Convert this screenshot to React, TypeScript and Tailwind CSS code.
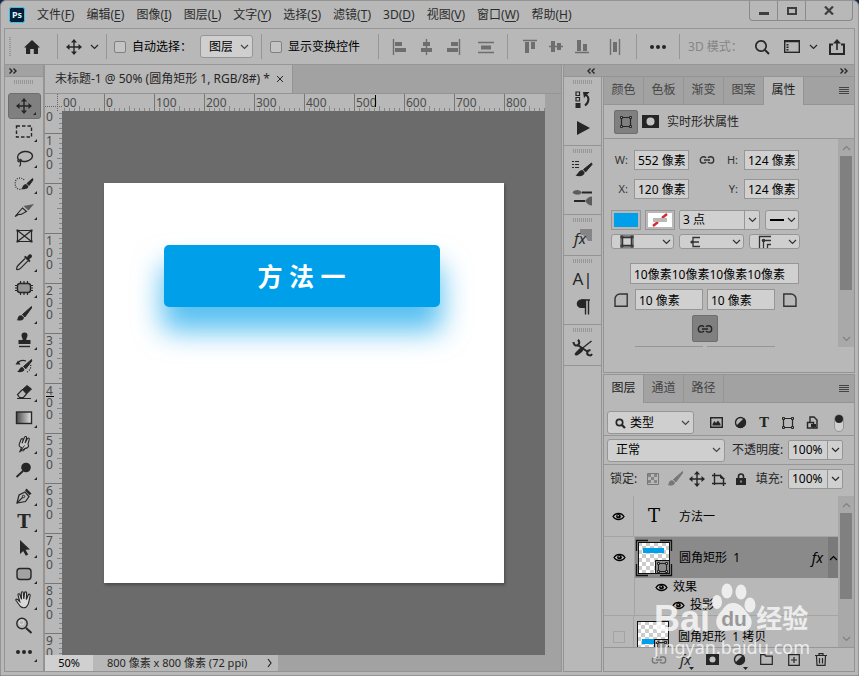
import type { ReactNode } from 'react';

const INK = '#262626';

const menus = [
  ['文件', 'F'], ['编辑', 'E'], ['图像', 'I'], ['图层', 'L'], ['文字', 'Y'], ['选择', 'S'],
  ['滤镜', 'T'], ['3D', 'D'], ['视图', 'V'], ['窗口', 'W'], ['帮助', 'H'],
];

function Svg({ w = 24, h = 24, children }: { w?: number; h?: number; children: ReactNode }) {
  return (
    <svg width={w} height={h} viewBox={`0 0 ${w} ${h}`} fill="none" stroke="currentColor" strokeWidth="1.4" className="shrink-0" aria-hidden="true">
      {children}
    </svg>
  );
}

function Chevron({ up = false }: { up?: boolean }) {
  return (
    <Svg w={9} h={6}>
      <path d={up ? 'M1 5l3.5-3.5L8 5' : 'M1 1l3.5 3.5L8 1'} strokeWidth="1.2" />
    </Svg>
  );
}

const moveIcon = (
  <Svg>
    <path d="M12 6v12M6 12h12" />
    <path d="M12 4l3 3.5H9zM12 20l3-3.5H9zM4 12l3.5-3v6zM20 12l-3.5-3v6z" fill="currentColor" stroke="none" />
  </Svg>
);

const brushIcon = (
  <Svg>
    <path d="M19.500 4.500L10.500 12.500l2.300 2.500L19.500 6z" fill="currentColor" strokeWidth="1" />
    <path d="M9.500 13.200c-2.500-.2-3.500 1.600-3.800 3.300-.2 1-.8 1.500-1.400 1.600 3 1.200 7.500.2 7.700-2.700z" fill="currentColor" stroke="none" />
  </Svg>
);

const shapeBoxIcon = (
  <Svg w={14} h={14}>
    <path d="M2.500 2.500h9v9h-9z" strokeWidth="1.2" />
    <path d="M1.500 1.500h2v2h-2zM10.500 1.500h2v2h-2zM1.500 10.500h2v2h-2zM10.500 10.500h2v2h-2z" fill="#a0a0a0" strokeWidth="1" />
  </Svg>
);

const chainIcon = (
  <Svg w={16} h={10}>
    <path d="M7 2.800C6.300 2 5.500 1.700 4.500 1.700a3.200 3.200 0 000 6.400c1 0 1.800-.3 2.500-1.100M9 2.800c.7-.8 1.500-1.100 2.500-1.100a3.200 3.200 0 010 6.400c-1 0-1.800-.3-2.500-1.100M5 5h6" />
  </Svg>
);

const maskIcon = (
  <Svg w={17} h={13}>
    <rect width="17" height="13" fill="currentColor" stroke="none" />
    <circle cx="8.500" cy="6.500" r="4" fill="#c4c4c4" stroke="none" />
  </Svg>
);

const halfIcon = (
  <Svg w={13} h={13}>
    <circle cx="6.500" cy="6.500" r="5" />
    <path d="M10 3a5 5 0 01-7 7z" fill="currentColor" />
  </Svg>
);

const searchIcon = (
  <Svg w={16} h={16}>
    <circle cx="7" cy="7" r="5.200" strokeWidth="1.700" />
    <path d="M11 11l4 4" strokeWidth="2" />
  </Svg>
);

const eyeIcon = (
  <Svg w={13} h={9}>
    <path d="M1 4.500C3.500.3 9.500.3 12 4.500 9.500 8.700 3.500 8.700 1 4.500z" strokeWidth="1.300" />
    <circle cx="6.500" cy="4.300" r="2.300" fill="currentColor" stroke="none" />
    <circle cx="6.200" cy="3.700" r=".8" fill="#c4c4c4" stroke="none" />
  </Svg>
);

const tools: { name: string; icon: ReactNode; flyout?: boolean }[] = [
  { name: '移动', icon: moveIcon },
  { name: '矩形选框', icon: <Svg><rect x="4.500" y="6" width="15" height="11" strokeDasharray="3.500 2" /></Svg> },
  {
    name: '套索',
    icon: (
      <Svg>
        <ellipse cx="13" cy="10.500" rx="7.500" ry="5" transform="rotate(-8 13 10.500)" />
        <path d="M6.500 13.500c-1.500 1-.5 2.700 1.500 2.200s1.500-2.700-.2-2.500M8 15.500c1 1.500 1 3-.5 5" strokeWidth="1.100" />
      </Svg>
    ),
  },
  {
    name: '快速选择',
    icon: (
      <Svg>
        <path d="M12 8c-1-2-6-3-8 0-1.500 3-1 8 2 9 1.500.7 3 .5 4 0" strokeDasharray="1 1.300" strokeWidth="1.200" />
        <path d="M20.500 6.500l-5.500 5 2 2L21 8z" fill="currentColor" strokeWidth="1" />
        <path d="M14 12c-3 .3-3.200 3-4.500 5 3 .5 7 0 6.800-2.800z" fill="currentColor" stroke="none" />
      </Svg>
    ),
  },
  {
    name: '切片',
    icon: (
      <Svg>
        <path d="M11.500 8l10.500-2-5.500 6.500z" fill="#5c5c5c" stroke="none" />
        <path d="M3 18.500l7.500-8.500 4 3.500-5.500 3-2-.2z" strokeWidth="1.100" />
      </Svg>
    ),
  },
  {
    name: '图框',
    flyout: false,
    icon: (
      <Svg>
        <path d="M5.500 6.500h14v11h-14zM5.500 6.500l14 11M19.500 6.500l-14 11" strokeWidth="1.200" />
        <path d="M4.500 5.500h2v2h-2zM18.500 5.500h2v2h-2zM4.500 16.500h2v2h-2zM18.500 16.500h2v2h-2z" fill="currentColor" stroke="none" />
      </Svg>
    ),
  },
  {
    name: '吸管',
    icon: (
      <Svg>
        <path d="M13 8.500L6 15.500c-1 1-1.500 2.500-1.300 4 1.500.2 3-.3 4-1.300l7-7" strokeWidth="1.200" />
        <path d="M12 7l1.300-1.300 1.700 1.200 1.800-2.200c2-1.500 4.200.8 2.700 2.700L17.300 9.200l1.200 1.800-1.300 1.300z" fill="currentColor" stroke="none" />
      </Svg>
    ),
  },
  {
    name: '修补',
    icon: (
      <Svg>
        <rect x="5.500" y="7.500" width="13" height="9" rx="2.500" fill="#959595" />
        <path d="M8.500 5v3M12 5v3M15.500 5v3M8.500 16v3M12 16v3M15.500 16v3M3 9.500h3M3 12h3M3 14.500h3M18 9.500h3M18 12h3M18 14.500h3" strokeWidth="1.200" />
      </Svg>
    ),
  },
  { name: '画笔', icon: brushIcon },
  {
    name: '仿制图章',
    icon: (
      <Svg>
        <path d="M12.500 4.500a3 3 0 013 3c0 1.500-1.200 2.200-1.200 4.500h4.200v4h-12v-4h4.200c0-2.300-1.200-3-1.200-4.500a3 3 0 013-3z" fill="currentColor" stroke="none" />
        <path d="M7 18.500h11" />
      </Svg>
    ),
  },
  {
    name: '历史记录画笔',
    icon: (
      <Svg>
        <path d="M19.500 5.500l-8 7 2.300 2.300 6-7.800z" fill="currentColor" strokeWidth="1" />
        <path d="M10.500 13c-3 0-3 3.500-5.500 4.800 3 1 7.300.3 7.500-2.600z" fill="currentColor" stroke="none" />
        <path d="M6 8.500c2-2 5-2.500 8-1.500" strokeWidth="1.200" />
        <path d="M3.500 10.500L6 6.500l2.500 4z" fill="currentColor" stroke="none" />
        <path d="M18.500 11c1 3-1 6-4.500 7.500" strokeDasharray="1 1.500" strokeWidth="1.200" />
      </Svg>
    ),
  },
  {
    name: '橡皮擦',
    icon: (
      <Svg>
        <path d="M10.500 9.500L15 5.500l4.500 3.500-5 5z" fill="currentColor" strokeWidth="1" />
        <path d="M10.500 9.500l-5 5 2 3h4l3-3.500M5 18.500h14" strokeWidth="1.200" />
      </Svg>
    ),
  },
  {
    name: '渐变',
    icon: (
      <Svg>
        <defs>
          <linearGradient id="grad"><stop stopColor="#4a4a4a" /><stop offset="1" stopColor="#e4e4e4" /></linearGradient>
        </defs>
        <rect x="4.500" y="6" width="15" height="11.500" fill="url(#grad)" />
      </Svg>
    ),
  },
  {
    name: '涂抹',
    icon: (
      <Svg>
        <path d="M8 19.500l1.500-4c-2-.5-3-2-2-4l1.500-4c.8-1.500 2.500-.8 2 .8l-1 3 2.500-6c.8-1.500 2.400-.8 2 .8l-1.500 5 2.500-4.500c.9-1.200 2.200-.3 1.700 1L16 12c1.500 2.500-.5 4.500-3 4.500z" fill="#c8c8c8" strokeWidth="1.100" />
        <path d="M8 19.500l4.500-6M11 19.500l3-4" strokeWidth="1" />
      </Svg>
    ),
  },
  {
    name: '减淡',
    icon: (
      <Svg>
        <circle cx="14" cy="9.500" r="4.800" fill="currentColor" stroke="none" />
        <path d="M11 13l-6.500 6" strokeWidth="1.800" />
      </Svg>
    ),
  },
  {
    name: '钢笔',
    icon: (
      <Svg>
        <path d="M5 19l2-8 6-3 4 4.500-3.500 5z" strokeWidth="1.200" />
        <path d="M5 19l6-6" strokeWidth="1.100" />
        <circle cx="11.500" cy="12.500" r="1.200" fill="#b8b8b8" strokeWidth="1" />
        <path d="M13 6.500l1.500-2 5 5-2 1.800z" fill="currentColor" stroke="none" />
      </Svg>
    ),
  },
  { name: '文字', icon: <span className="font-['DejaVu_Serif',serif] text-[18px] leading-6 font-bold">T</span> },
  { name: '路径选择', icon: <Svg><path d="M8 4l10 9.500-4.500.3 2.700 4.700-2.400 1.200-2.600-4.700L8 18z" fill="currentColor" stroke="none" /></Svg> },
  { name: '圆角矩形', icon: <Svg><rect x="5" y="6.500" width="14" height="11" rx="3" fill="#a3a3a3" /></Svg> },
  {
    name: '抓手',
    icon: (
      <Svg>
        <path d="M8.500 18.500c-1.500-1.500-2.500-3.500-4.500-6-.7-1.200.7-1.800 1.600-1L7.700 13.500 6 7c-.2-1.300 1.500-1.700 1.900-.5l1.600 4.700L9.300 4.800c0-1.400 1.900-1.500 2 0l.5 6.200.8-6.200c.2-1.300 2-1.200 2 .2l-.2 6.500 1.900-4.700c.5-1.200 2.200-.6 1.900.6-.7 3-1 5.200-1.700 8-.4 1.500-1.200 2.500-2.200 3.600-1.800 1-4.200.9-5.800-.5z" fill="#d8d8d8" strokeWidth="1.100" />
      </Svg>
    ),
  },
  {
    name: '缩放',
    flyout: false,
    icon: (
      <Svg>
        <circle cx="10" cy="9.500" r="5.200" />
        <circle cx="9.500" cy="8.500" r="2.500" stroke="#e0e0e0" strokeWidth="1" />
        <path d="M14 14l5.500 5" strokeWidth="2" />
      </Svg>
    ),
  },
  { name: '编辑工具栏', icon: <Svg><g fill="currentColor" stroke="none"><circle cx="6" cy="12" r="2" /><circle cx="12" cy="12" r="2" /><circle cx="18" cy="12" r="2" /></g></Svg> },
];

const alignA = [
  { name: '左对齐', d: 'M4.500 4v16', r: 'M6 7h7v4H6zM6 13h11v4H6z' },
  { name: '水平居中对齐', d: 'M11.500 4v16', r: 'M8 7h7v4H8zM6 13h11v4H6z' },
  { name: '右对齐', d: 'M18.500 4v16', r: 'M10 7h7v4h-7zM6 13h11v4H6z' },
];
const alignB = [
  { name: '顶对齐', d: 'M5 5.500h14', r: 'M7 7h4v11H7zM13 7h4v7h-4z' },
  { name: '垂直居中对齐', d: 'M5 11.500h14', r: 'M7 6h4v11H7zM13 8h4v7h-4z' },
  { name: '底对齐', d: 'M5 17.500h14', r: 'M7 5h4v11H7zM13 9h4v7h-4z' },
];

function AlignButton({ name, d, r }: { name: string; d: string; r: string }) {
  return (
    <button aria-label={name} className="flex w-[26px] justify-center text-[#6e6e6e]">
      <Svg>
        <path d={d} />
        <path d={r} fill="currentColor" stroke="none" />
      </Svg>
    </button>
  );
}

function Divider() {
  return <span className="h-[25px] w-px shrink-0 bg-[#969696]" />;
}

function Select({ label, value, className = '' }: { label: string; value: string; className?: string }) {
  return (
    <div className={`relative shrink-0 rounded-[3px] border border-[#969696] bg-[#cfcfcf] text-black ${className}`}>
      <select aria-label={label} className="h-full w-full appearance-none pr-5 pl-2 outline-none">
        <option>{value}</option>
      </select>
      <span className="pointer-events-none absolute inset-y-0 right-[3px] flex items-center text-[#444]"><Chevron /></span>
    </div>
  );
}

function Field({ label, value, className = '' }: { label: string; value: string; className?: string }) {
  return (
    <input aria-label={label} defaultValue={value} className={`border border-[#969696] bg-[#d0d0d0] px-[3px] text-black outline-none ${className}`} />
  );
}

function PercentField({ id, value }: { id: string; value: string }) {
  return (
    <div className="flex h-5 w-[55px] rounded-[2px] border border-[#969696] bg-[#d0d0d0]">
      <input id={id} defaultValue={value} className="min-w-0 flex-1 px-[3px] text-black outline-none" />
      <button aria-label="滑块" className="flex w-[15px] items-center justify-center border-l border-[#969696]"><Chevron /></button>
    </div>
  );
}

function IconSelect({ label, className = '', children }: { label: string; className?: string; children: ReactNode }) {
  return (
    <button aria-label={label} aria-haspopup="listbox" className={`flex items-center justify-between overflow-hidden rounded-[3px] border border-[#969696] bg-[#cfcfcf] pr-[2px] ${className}`}>
      {children}
      <Chevron />
    </button>
  );
}

function Grip() {
  return (
    <Svg w={20} h={4}>
      <path d="M0 2h20" stroke="#969696" strokeWidth="4" strokeDasharray="1 1" />
    </Svg>
  );
}

function PanelTabs({ names, active }: { names: string[]; active: string }) {
  return (
    <div role="tablist" className="flex h-7 shrink-0 bg-[#a2a2a2]">
      {names.map(n => (
        <button
          key={n}
          role="tab"
          aria-selected={n === active}
          className={n === active ? 'w-10 border-r border-[#949494] bg-[#b8b8b8] pb-[2px] text-[#1c1c1c]' : 'w-10 border-r border-b border-[#949494] pb-[2px] text-[#444]'}
        >
          {n}
        </button>
      ))}
      <div className="flex flex-1 items-center justify-end border-b border-[#949494] pr-[5px]">
        <button aria-label="面板菜单"><Svg w={10} h={8}><path d="M0 .5h10M0 2.500h10M0 4.500h10M0 6.500h10" strokeWidth="1" stroke="#444" /></Svg></button>
      </div>
    </div>
  );
}

function ScrollBar({ thumb }: { thumb: string }) {
  return (
    <div className="flex w-4 shrink-0 flex-col items-center bg-[#a9a9a9] text-[#808080]">
      <span className="flex h-[17px] items-center"><Chevron up /></span>
      <span className={`w-3 bg-[#808080] ${thumb}`} />
      <span className="mt-auto flex h-[17px] items-center"><Chevron /></span>
    </div>
  );
}

/* Rulers: one segment is 100 units, 50px */
function TopRuler() {
  const labels = ['00', '0', '100', '200', '300', '400', '500', '600', '700', '800'];
  return (
    <div className="flex h-[17px] min-w-0 flex-1 overflow-hidden">
      {labels.map((l, i) => (
        <div key={l} className={`relative shrink-0 overflow-hidden pl-px leading-[18px] ${i === 0 ? 'w-[42px]' : 'w-[50px] border-l border-[#777]'}`}>
          {l}
          <svg width="50" height="5" className="absolute right-0 bottom-0" aria-hidden="true">
            <path d="M5.500 2v3M10.500 2v3M15.500 2v3M20.500 2v3M25.500 0v5M30.500 2v3M35.500 2v3M40.500 2v3M45.500 2v3" stroke="#858585" />
          </svg>
          {l === '500' && <span className="absolute bottom-1 left-5 h-3 w-px bg-black" />}
        </div>
      ))}
    </div>
  );
}

function SideRuler() {
  const labels = ['0', '100', '0', '100', '200', '300', '400', '500', '600', '700', '800', '900'];
  return (
    <div className="flex w-[17px] shrink-0 flex-col overflow-hidden">
      {labels.map((l, i) => (
        <div key={i} className={`relative shrink-0 overflow-hidden pl-px ${i === 0 ? 'h-[22px]' : 'h-[50px] border-t border-[#777] pt-px'}`}>
          {l.split('').map((c, j) => <span key={j} className="block h-3 leading-3">{c}</span>)}
          <svg width="5" height="50" className="absolute right-0 bottom-0" aria-hidden="true">
            <path d="M2 5.500h3M2 10.500h3M2 15.500h3M2 20.500h3M0 25.500h5M2 30.500h3M2 35.500h3M2 40.500h3M2 45.500h3" stroke="#858585" />
          </svg>
          {l === '400' && <span className="absolute top-3 left-px h-px w-2 bg-black" />}
        </div>
      ))}
    </div>
  );
}

function TitleBar() {
  return (
    <header className="flex h-[27px] shrink-0 items-center">
      <svg width="16" height="16" viewBox="0 0 16 16" className="ml-[5px]" role="img" aria-label="Photoshop">
        <rect x=".5" y=".5" width="15" height="15" rx="2" fill="#001e36" stroke="#31c5f0" />
        <text x="8" y="11" textAnchor="middle" fontSize="9" fontWeight="bold" fill="#d8f3ff" fontFamily="Noto Sans, sans-serif">Ps</text>
      </svg>
      <nav className="ml-3 flex gap-3 text-[#2c2c2c]">
        {menus.map(([n, k]) => <button key={k} className="whitespace-nowrap">{n}(<u className="underline-offset-2">{k}</u>)</button>)}
      </nav>
      <div className="mr-[2px] ml-auto flex h-5 self-start rounded-b-[4px] border border-t-0 border-[#8a8a8a] text-[#3f3f3f]">
        <button aria-label="最小化" className="flex w-7 items-center justify-center border-r border-[#8a8a8a]"><Svg w={10} h={8}><path d="M0 6.500h10" strokeWidth="3" /></Svg></button>
        <button aria-label="最大化" className="flex w-7 items-center justify-center border-r border-[#8a8a8a]"><Svg w={10} h={8}><rect x="1" y="1" width="8" height="6" strokeWidth="2" /></Svg></button>
        <button aria-label="关闭" className="flex w-[46px] items-center justify-center"><Svg w={10} h={9}><path d="M1 .5l8 8M9 .5l-8 8" strokeWidth="2.200" /></Svg></button>
      </div>
    </header>
  );
}

function OptionsBar() {
  return (
    <div className="flex h-[37px] shrink-0 items-center border border-[#969696] text-black">
      <Svg w={14} h={20}><path d="M5 0v20" stroke="#969696" strokeWidth="2" strokeDasharray="1 1" /></Svg>
      <button aria-label="主页" className="flex w-[38px] items-center justify-start pl-[5px] text-[#262626]">
        <Svg w={16} h={14}><path d="M8 0l8 7.500h-2V14H9.800V9H6.200v5H2V7.500H0z" fill="currentColor" stroke="none" /></Svg>
      </button>
      <Divider />
      <button aria-label="移动工具预设" className="flex w-12 items-center gap-1 pl-1 text-[#262626]">{moveIcon}<Chevron /></button>
      <Divider />
      <label className="flex items-center gap-[6px] pl-[7px] whitespace-nowrap">
        <input type="checkbox" className="h-3 w-3 appearance-none rounded-[2px] border border-[#808080] bg-[#c4c4c4]" />
        自动选择：
      </label>
      <Select label="自动选择对象" value="图层" className="ml-2 h-[23px] w-[53px]" />
      <span className="w-2" />
      <Divider />
      <label className="flex items-center gap-[6px] pl-2 whitespace-nowrap">
        <input type="checkbox" className="h-3 w-3 appearance-none rounded-[2px] border border-[#808080] bg-[#c4c4c4]" />
        显示变换控件
      </label>
      <span className="w-[18px]" />
      <Divider />
      <div className="flex pl-[9px]">{alignA.map(a => <AlignButton key={a.name} {...a} />)}</div>
      <button aria-label="垂直分布" className="mr-[9px] flex w-[32px] justify-end text-[#6e6e6e]">
        <Svg><path d="M4 7.500h16M4 17.500h16" /><path d="M7 10.500h10v4H7z" fill="currentColor" stroke="none" /></Svg>
      </button>
      <Divider />
      <div className="flex pl-[9px]">{alignB.map(a => <AlignButton key={a.name} {...a} />)}</div>
      <button aria-label="水平分布" className="mr-[9px] flex w-[32px] justify-end text-[#6e6e6e]">
        <Svg><path d="M7.500 4v16M16.500 4v16" /><path d="M10 7h4v10h-4z" fill="currentColor" stroke="none" /></Svg>
      </button>
      <Divider />
      <button aria-label="更多" className="flex w-[42px] justify-center text-[#262626]">
        <Svg w={16} h={4}><g fill="currentColor" stroke="none"><circle cx="2" cy="2" r="2" /><circle cx="8" cy="2" r="2" /><circle cx="14" cy="2" r="2" /></g></Svg>
      </button>
      <Divider />
      <span className="pl-2 whitespace-nowrap text-[#858585]">3D 模式：</span>
      <div className="ml-auto flex items-center pr-2 text-[#262626]">
        <button aria-label="搜索">{searchIcon}</button>
        <button aria-label="工作区" className="ml-[14px] flex items-center gap-[9px]">
          <Svg w={16} h={13}><rect x=".7" y=".7" width="14.600" height="11.600" /><path d="M1 1.500h14" /><path d="M2.500 4h2v1.500h-2zM2.500 6.500h2V8h-2zM2.500 9h2v1.500h-2z" fill="currentColor" stroke="none" /></Svg>
          <Chevron />
        </button>
        <button aria-label="共享" className="ml-[10px]">
          <Svg w={18} h={16}><path d="M5 5.500H2V15h14V5.500h-3" strokeWidth="2" /><path d="M9 11V2" strokeWidth="1.600" /><path d="M9 0l4 4.500H5z" fill="currentColor" stroke="none" /></Svg>
        </button>
      </div>
    </div>
  );
}

function Toolbar() {
  return (
    <aside className="flex w-[41px] shrink-0 flex-col overflow-hidden border-r-2 border-b border-l border-[#949494]">
      <div className="flex h-3 shrink-0 items-center border-b border-[#949494] bg-[#a2a2a2] pl-1">
        <DoubleArrow />
      </div>
      <div className="flex h-4 shrink-0 justify-center pt-[3px]"><Grip /></div>
      <div className="flex flex-col items-center text-[#262626]">
        {tools.map((t, i) => (
          <button
            key={t.name}
            aria-label={t.name}
            className={`relative flex h-[26px] w-[33px] items-center justify-center ${i === 0 ? 'rounded-[3px] border border-[#6e6e6e] bg-[#808080]' : ''}`}
          >
            {t.icon}
            {t.flyout !== false && (
              <svg width="3" height="3" className="absolute right-1 bottom-[3px]" aria-hidden="true"><path d="M3 0v3H0z" fill={INK} /></svg>
            )}
          </button>
        ))}
      </div>
    </aside>
  );
}

function DoubleArrow({ left = false }: { left?: boolean }) {
  return (
    <button aria-label={left ? '展开面板' : '折叠面板'} className="text-[#262626]">
      <Svg w={8} h={6}><path d={left ? 'M3.500.5L1 3l2.500 2.500M7.500.5L5 3l2.500 2.500' : 'M.5.5L3 3 .5 5.500M4.500.5L7 3 4.500 5.500'} /></Svg>
    </button>
  );
}

function DocumentArea() {
  return (
    <main className="mr-px flex min-w-0 flex-1 flex-col border-r border-b border-[#949494] bg-[#a2a2a2]">
      <div className="flex h-[29px] shrink-0 border-b border-[#949494]">
        <div className="flex items-center gap-[6px] border-r border-[#949494] bg-[#b8b8b8] pr-2 pl-[10px] whitespace-nowrap text-[#262626]">
          未标题-1 @ 50% (圆角矩形 1, RGB/8#) *
          <button aria-label="关闭文档"><Svg w={8} h={8}><path d="M1 1l6 6M7 1L1 7" strokeWidth="1" /></Svg></button>
        </div>
      </div>
      <div className="flex min-h-0 flex-1">
        <div className="flex min-w-0 flex-1 flex-col bg-[#b8b8b8] text-[#4c4c4c]">
          <div className="flex">
            <Svg w={17} h={17}><path d="M0 12.500h17M12.500 0v17" stroke="#666" strokeWidth="1" strokeDasharray="1 1" /></Svg>
            <TopRuler />
          </div>
          <div className="flex min-h-0 flex-1">
            <SideRuler />
            <div className="flex min-w-0 flex-1 items-center justify-center overflow-hidden bg-[#6b6b6b]">
              <div className="relative h-[400px] w-[400px] shrink-0 bg-white shadow-[1px_2px_3px_rgba(0,0,0,0.3)]">
                <div className="absolute top-[62px] left-[60px] flex h-[62px] w-[276px] items-center justify-center rounded-[5px] bg-[#009fe9] text-[25px] font-bold text-white shadow-[0_22px_28px_2px_rgba(0,159,233,0.66)]">
                  方 法 一
                </div>
              </div>
            </div>
          </div>
        </div>
        <div className="w-4 shrink-0" />
      </div>
      <footer className="flex h-4 shrink-0 text-[#262626]">
        <span className="flex w-12 items-center justify-center bg-[#d0d0d0] text-[11px] leading-4 text-black">50%</span>
        <div className="flex items-center gap-5 bg-[#b8b8b8] pr-[6px] pl-[14px] text-[11px] leading-4 whitespace-nowrap">
          800 像素 x 800 像素 (72 ppi)
          <Svg w={5} h={10}><path d="M1 1l3 4-3 4" strokeWidth="1.200" /></Svg>
        </div>
      </footer>
    </main>
  );
}

const dockGroups: { name: string; icon: ReactNode }[][] = [
  [
    {
      name: '历史记录',
      icon: (
        <Svg>
          <path d="M5 4h3.500v3.500H5zM5 9.500h3.500V13H5z" strokeWidth="1.200" /><path d="M4.500 15h5v5h-5z" fill="currentColor" stroke="none" />
          <path d="M14.500 6.500c4 2.500 4 7.500-.5 11" strokeWidth="2" /><path d="M12 4h6.500L13 10z" fill="currentColor" stroke="none" />
        </Svg>
      ),
    },
    { name: '动作', icon: <Svg><path d="M6 5l13 7-13 7z" fill="currentColor" stroke="none" /></Svg> },
  ],
  [
    {
      name: '画笔设置',
      icon: (
        <Svg>
          <path d="M1 4.500h2M4 4.500h4M1 7.500h2M4 7.500h4M1 10.500h2M4 10.500h4" strokeWidth="1.200" />
          <path d="M20.500 6l-8 6.500 2 2.500L21 7.500z" fill="currentColor" strokeWidth="1" />
          <path d="M11.500 13c-4 0-4 4-7 5.500 4 1.500 9 .5 9.200-3z" fill="currentColor" stroke="none" />
        </Svg>
      ),
    },
    {
      name: '画笔',
      icon: (
        <Svg>
          <path d="M11 7.500h10M3 16h11" strokeWidth="2" />
          <path d="M1.500 7.500C4 4 9 4.500 11 7.500c-2 3-7 3-9.500 0zM21 11.500v9c-3 0-5-2-7-4.500 2-2.500 4-4.500 7-4.500z" fill="#5c5c5c" stroke="none" />
        </Svg>
      ),
    },
  ],
  [{
    name: '样式',
    icon: (
      <Svg>
        <path d="M9 3h12v12h-4l-3-5-5-2z" fill="#858585" stroke="none" />
        <text x="3" y="18" fontSize="15" fontStyle="italic" fontFamily="Noto Sans, sans-serif" fill={INK} stroke="none">fx</text>
      </Svg>
    ),
  }],
  [
    { name: '字符', icon: <span className="text-[17px] leading-6 whitespace-nowrap">A|</span> },
    { name: '段落', icon: <Svg><path d="M14.500 4.500v15M17.500 4.500v15M10 5h9" /><path d="M14 4.500h-4a4 4 0 000 8.500h4z" fill="currentColor" stroke="none" /></Svg> },
  ],
  [{
    name: '工具预设',
    icon: (
      <Svg>
        <path d="M6 8.500l11 7.500" strokeWidth="2" />
        <path d="M2.500 6c0 3 2 4 5 3.200M7 3.800c1.500 1.500 1.500 3.500.5 5M21 18a2.500 2.500 0 11-1.500-3.500" strokeWidth="2" />
        <path d="M20.500 5L11 12.500" /><path d="M12 13c-1-3-4-.5-7.500 3.500-2 2.500 0 4 2.500 2.500 4-2.500 6-5 5-6z" fill="currentColor" stroke="none" />
      </Svg>
    ),
  }],
];

function IconDock() {
  return (
    <div className="w-[39px] shrink-0 border-x border-b border-[#949494] text-[#262626]">
      {dockGroups.map((g, i) => (
        <div key={i} className="flex flex-col items-center border-b border-[#949494] pt-[3px] pb-[3px]">
          <Grip />
          <span className="h-[2px]" />
          {g.map(b => <button key={b.name} aria-label={b.name} className="flex h-7 w-7 items-center justify-center">{b.icon}</button>)}
        </div>
      ))}
    </div>
  );
}

function PropertiesPanel() {
  return (
    <section className="shrink-0 border border-t-0 border-[#949494] pb-[25px]">
      <PanelTabs names={['颜色', '色板', '渐变', '图案', '属性']} active="属性" />
      <div className="flex h-[34px] items-center border-b border-[#969696] pl-[10px] text-[#262626]">
        <button aria-label="形状" className="mr-1 flex h-6 w-6 items-center justify-center rounded-[2px] border border-[#6e6e6e] bg-[#808080]">{shapeBoxIcon}</button>
        <button aria-label="蒙版">{maskIcon}</button>
        <span className="pl-2">实时形状属性</span>
      </div>
      <div className="flex h-[208px] overflow-hidden text-[#333]">
        <div className="min-w-0 flex-1 pt-[11px]">
          <div className="w-[196px]">
            {[['W', '552 像素', 'H', '124 像素'], ['X', '120 像素', 'Y', '124 像素']].map(([a, av, b, bv], i) => (
              <div key={a} className="mb-[9px] flex h-5 items-center">
                <label className="flex h-5 items-center"><span className="w-[30px] pr-[6px] text-right text-[11px]">{a}:</span><Field label={a} value={av} className="h-5 w-[55px]" /></label>
                <span className="flex w-[35px] justify-center">{i === 0 && chainIcon}</span>
                <label className="flex h-5 items-center"><span className="w-5 pr-[6px] text-right text-[11px]">{b}:</span><Field label={b} value={bv} className="h-5 w-[55px]" /></label>
              </div>
            ))}
            <div className="flex h-[22px] pt-[2px] pl-[7px]">
              <button aria-label="填充颜色" className="mr-1 w-[30px] border border-[#969696] p-[2px]"><span className="block h-full bg-[#009fe9]" /></button>
              <button aria-label="描边颜色" className="mr-1 w-[30px] border border-[#969696] p-[2px]">
                <svg viewBox="0 0 24 14" className="h-full w-full bg-white" aria-hidden="true">
                  <path d="M5 13l5-4M14 5l5-4" stroke="#d42a2a" strokeWidth="2.500" /><path d="M5 5h14v4H5z" fill="#b8b8b8" />
                </svg>
              </button>
              <div className="mr-[5px] flex w-[81px] rounded-[2px] border border-[#969696] bg-[#d0d0d0]">
                <input aria-label="描边宽度" defaultValue="3 点" className="min-w-0 flex-1 px-[3px] text-black outline-none" />
                <button aria-label="描边宽度滑块" className="flex w-[15px] items-center justify-center border-l border-[#969696]"><Chevron /></button>
              </div>
              <IconSelect label="描边类型" className="w-[34px] pl-1"><span className="h-[2px] w-[14px] bg-black" /></IconSelect>
            </div>
            <div className="mt-1 flex h-[15px] pl-[7px]">
              <IconSelect label="描边对齐" className="mr-[5px] w-[63px] pl-2">
                <Svg w={14} h={13}><rect width="14" height="13" fill="#858585" stroke="none" /><path d="M2.500 2.500h9v8h-9z" fill="#d0d0d0" strokeWidth="1.500" /><path d="M1 1h2v2H1zM11 1h2v2h-2zM1 10h2v2H1zM11 10h2v2h-2z" strokeWidth="1" /></Svg>
              </IconSelect>
              <IconSelect label="描边端点" className="mr-[5px] w-[65px] pl-[10px]">
                <Svg w={10} h={12}><path d="M10 1.500H3v9h7M2 6h7" strokeWidth="1.300" /><circle cx="2" cy="6" r="1.600" fill="currentColor" stroke="none" /></Svg>
              </IconSelect>
              <IconSelect label="描边合并" className="w-[51px] pl-2">
                <Svg w={13} h={13}><path d="M1.500 13V1.500H13M5.500 13V5.500H13M9.500 13V9.500H13" strokeWidth="1.300" /><circle cx="5.500" cy="5.500" r="1.800" fill="currentColor" stroke="none" /></Svg>
              </IconSelect>
            </div>
            <div className="mt-[14px] flex pl-[26px]"><Field label="圆角半径" value="10像素10像素10像素10像素" className="h-[21px] w-[169px]" /></div>
            <div className="mt-[5px] flex items-center pl-[10px]">
              <Svg w={14} h={14}><path d="M1 13.200V6a5 5 0 015-5h7.200v12.200z" /></Svg>
              <Field label="左上角半径" value="10 像素" className="ml-[7px] h-[21px] w-[68px]" />
              <Field label="右上角半径" value="10 像素" className="mx-1 h-[21px] w-[68px]" />
              <span className="pl-1"><Svg w={14} h={14}><path d="M.8 13.200V1H8a5 5 0 015 5v7.200z" /></Svg></span>
            </div>
            <div className="mt-[5px] flex justify-center pl-[6px]">
              <button aria-label="链接圆角半径" className="flex h-[27px] w-[26px] items-center justify-center rounded-[2px] border border-[#6e6e6e] bg-[#808080] text-[#262626]">{chainIcon}</button>
            </div>
            <div className="mt-1 flex gap-1 pl-[31px]">
              <Field label="左下角半径" value="" className="h-[21px] w-[68px]" />
              <Field label="右下角半径" value="" className="h-[21px] w-[68px]" />
            </div>
          </div>
        </div>
        <ScrollBar thumb="h-[134px]" />
      </div>
    </section>
  );
}

function LayerThumb({ selected = false }: { selected?: boolean }) {
  return (
    <svg width="38" height="38" viewBox="0 0 38 38" className="shrink-0" aria-hidden="true">
      <defs>
        <pattern id="checker" width="8" height="8" patternUnits="userSpaceOnUse" x="3" y="3">
          <path d="M0 0h8v8H0z" fill="#fff" /><path d="M0 0h4v4H0zM4 4h4v4H4z" fill="#ccc" />
        </pattern>
      </defs>
      {selected && <path d="M1.500 12V1.500H13M25 1.500h11.500V12M36.500 25v11.500H25M13 36.500H1.500V25" fill="none" stroke="#111" strokeWidth="1.300" />}
      <rect x="3.500" y="3.500" width="31" height="31" fill="url(#checker)" stroke="#111" />
      <rect x="8" y={selected ? 9 : 21} width="21" height="5" fill="#009fe9" />
      <path d="M20.500 21.500h14v13h-14z" fill="#8c8c8c" stroke="#111" />
      <path d="M23.500 24.500h8v8h-8z" fill="#8c8c8c" stroke="#222" />
      <path d="M22.500 23.500h2v2h-2zM30.500 23.500h2v2h-2zM22.500 31.500h2v2h-2zM30.500 31.500h2v2h-2z" fill="#b8b8b8" stroke="#222" />
    </svg>
  );
}

const lockButtons: { name: string; icon: ReactNode }[] = [
  { name: '锁定透明像素', icon: <Svg w={12} h={12}><path d="M.5.500h11v11H.5z" stroke="#777" strokeWidth="1" /><path d="M1 1h3v3H1zM7 1h3v3H7zM4 4h3v3H4zM1 7h3v3H1zM7 7h3v3H7z" fill="#858585" stroke="none" /></Svg> },
  { name: '锁定图像像素', icon: <span className="text-[#777]">{brushIcon}</span> },
  { name: '锁定位置', icon: moveIcon },
  { name: '防止自动嵌套', icon: <Svg w={14} h={14}><path d="M2.500 1v12M0 3.500h8M0 11.500h14M11.500 6v8" /><path d="M8 2l5 5h-3.500L8 5.500z" fill="currentColor" stroke="none" /></Svg> },
  { name: '锁定全部', icon: <Svg w={10} h={12}><path d="M2.500 6V3.500a2.500 2.500 0 015 0V6" strokeWidth="1.600" /><path d="M0 5h10v7H0z" fill="currentColor" stroke="none" /><path d="M5 7.500v2" stroke="#b8b8b8" /></Svg> },
];

const filterButtons: { name: string; icon: ReactNode }[] = [
  { name: '像素图层', icon: <Svg w={13} h={11}><path d="M.7.700h11.600v9.600H.7z" /><path d="M2.500 8.500V7l2-3 1.500 2L8 3.500l2.500 3.500v1.500z" fill="currentColor" stroke="none" /></Svg> },
  { name: '调整图层', icon: halfIcon },
  { name: '文字图层', icon: <span className="font-['DejaVu_Serif',serif] text-[13px] leading-4 font-bold">T</span> },
  { name: '形状图层', icon: shapeBoxIcon },
  { name: '智能对象', icon: <Svg w={12} h={13}><path d="M4 6V1h4l3 3v8H8" /><path d="M1.500 6.500h6v5.500h-6z" /><path d="M5 8h5v3H5z" fill="currentColor" stroke="none" /></Svg> },
];

const layerActions: { name: string; icon: ReactNode; menu?: boolean }[] = [
  { name: '链接图层', icon: <span className="text-[#777]">{chainIcon}</span> },
  { name: '图层样式', menu: true, icon: <span className="text-[14px] leading-4 italic">fx</span> },
  { name: '添加蒙版', icon: <Svg w={13} h={11}><path d="M0 0h13v11H0z" fill="currentColor" stroke="none" /><circle cx="6.500" cy="5.500" r="3" fill="#c4c4c4" stroke="none" /></Svg> },
  { name: '新建调整图层', menu: true, icon: halfIcon },
  { name: '新建组', icon: <Svg w={13} h={11}><path d="M.7 10.300V.700h4l1 1.500h6.600v8.100z" strokeWidth="1.200" /></Svg> },
  { name: '新建图层', icon: <Svg w={12} h={12}><path d="M.7.700h10.600v10.600H.7zM6 3v6M3 6h6" strokeWidth="1.200" /></Svg> },
  { name: '删除图层', icon: <Svg w={12} h={13}><path d="M0 2.500h12M4 2V.700h4V2M1.500 3l.5 9.300h8l.5-9.300M4.500 5v5.500M7.500 5v5.500" strokeWidth="1.200" /></Svg> },
];

function LayersPanel() {
  return (
    <section className="mt-px flex min-h-0 flex-1 flex-col border border-[#949494] text-[#262626]">
      <PanelTabs names={['图层', '通道', '路径']} active="图层" />
      <div className="flex h-[33px] shrink-0 items-end border-b border-[#969696] pb-px pl-[3px]">
        <div className="relative">
          <Select label="图层过滤" value="类型" className="h-[23px] w-[87px] [&_select]:pl-[22px]" />
          <span className="pointer-events-none absolute top-[7px] left-2">
            <Svg w={11} h={11}><circle cx="4.500" cy="4.500" r="3.200" strokeWidth="1.700" /><path d="M7 7l3 3" strokeWidth="2.200" /></Svg>
          </span>
        </div>
        <div className="flex h-[23px] items-center pl-[10px]">
          {filterButtons.map(f => <button key={f.name} aria-label={f.name} className="flex w-6 items-center justify-center">{f.icon}</button>)}
          <button aria-label="过滤开关" className="ml-[10px] flex h-[18px] w-[10px] items-start rounded-full border border-[#969696] bg-[#cfcfcf]"><span className="h-2 w-2 rounded-full bg-[#262626]" /></button>
        </div>
      </div>
      <div className="flex h-[29px] shrink-0 items-center border-b border-[#969696] pr-[11px] pl-[3px]">
        <Select label="混合模式" value="正常" className="h-[23px] w-[118px]" />
        <label htmlFor="opacity" className="ml-[7px] whitespace-nowrap">不透明度:</label>
        <div className="ml-auto"><PercentField id="opacity" value="100%" /></div>
      </div>
      <div className="flex h-[31px] shrink-0 items-center pr-[11px] pb-[3px] pl-[6px]">
        <span className="w-8 whitespace-nowrap">锁定:</span>
        <div className="flex">{lockButtons.map(b => <button key={b.name} aria-label={b.name} className="flex w-[22px] items-center justify-center">{b.icon}</button>)}</div>
        <label htmlFor="fill" className="mr-[5px] ml-auto whitespace-nowrap">填充:</label>
        <PercentField id="fill" value="100%" />
      </div>
      <div className="flex min-h-0 flex-1">
        <ul className="min-w-0 flex-1 overflow-hidden text-black">
          <li className="flex h-[41px] border-b border-[#a4a4a4]">
            <button aria-label="隐藏图层" className="flex w-[30px] items-center justify-center border-r border-[#a4a4a4]">{eyeIcon}</button>
            <span className="w-10 text-center font-['DejaVu_Serif',serif] text-[18px] leading-10">T</span>
            <span className="pl-[5px] leading-[42px]">方法一</span>
          </li>
          <li className="flex h-[79px] border-b border-[#a4a4a4]">
            <button aria-label="隐藏图层" className="flex h-[41px] w-[30px] items-center justify-center">{eyeIcon}</button>
            <div className="min-w-0 flex-1 border-l border-[#a4a4a4]">
              <div className="flex h-[41px] items-center bg-[#8a8a8a]">
                <LayerThumb selected />
                <span className="flex-1 pl-[6px]">圆角矩形&nbsp; 1</span>
                <span className="pr-[5px] text-[14px] italic">fx</span>
                <button aria-label="折叠效果" className="flex h-full w-[10px] items-center justify-center bg-[#7a7a7a]"><Chevron up /></button>
              </div>
              <div className="flex h-[18px] items-center gap-[5px] pl-5">{eyeIcon}效果</div>
              <div className="flex h-[18px] items-center gap-[5px] pl-[37px]">{eyeIcon}投影</div>
            </div>
          </li>
          <li className="flex h-[41px]">
            <button aria-label="显示图层" className="flex w-[30px] items-center justify-center border-r border-[#a4a4a4]"><span className="h-3 w-3 border border-[#a4a4a4]" /></button>
            <div className="flex flex-1 items-center"><LayerThumb /><span className="pl-[6px]">圆角矩形&nbsp; 1 拷贝</span></div>
          </li>
        </ul>
        <ScrollBar thumb="h-[86px]" />
      </div>
      <div className="flex h-6 shrink-0 items-center border-t border-[#969696] pl-[41px]">
        {layerActions.map(a => (
          <button key={a.name} aria-label={a.name} className="relative flex h-full w-[27px] items-center justify-center">
            {a.icon}
            {a.menu && <svg width="5" height="3" className="absolute right-[5px] bottom-px" aria-hidden="true"><path d="M0 0h5L2.500 3z" fill={INK} /></svg>}
          </button>
        ))}
      </div>
    </section>
  );
}

function Watermark() {
  return (
    <div className="pointer-events-none absolute right-12 bottom-[18px] flex flex-col font-['Liberation_Sans','Noto_Sans_CJK_SC',sans-serif] text-white opacity-75">
      <div className="flex h-[54px] items-end">
        <span className="text-[36px] leading-9 font-bold">Bai</span>
        <svg width="46" height="50" viewBox="0 0 46 50" className="mb-1" aria-hidden="true">
          <g fill="#fff">
            <ellipse cx="7" cy="19" rx="5" ry="7" /><ellipse cx="17" cy="8" rx="5.500" ry="7.500" />
            <ellipse cx="31" cy="9" rx="5.500" ry="7.500" /><ellipse cx="40" cy="22" rx="5.500" ry="7.500" />
            <path d="M23 20c-8 0-9 6-14 11-5 6-3 17 6 17 4 0 5-1 9-1s6 1 9 1c9 0 11-10 6-16-5-5-7-12-16-12z" />
          </g>
          <text x="24" y="43" textAnchor="middle" fontSize="21" fontWeight="bold" fill="#8f8f8f" fontFamily="Liberation Sans, sans-serif">du</text>
        </svg>
        <span className="text-[26px] leading-9 font-bold whitespace-nowrap">经验</span>
      </div>
      <span className="font-['Noto_Sans',sans-serif] text-[18px] leading-5">jingyan.baidu.com</span>
    </div>
  );
}

export default function App() {
  return (
    <div className="bg-[#16284d] font-['Noto_Sans','Noto_Sans_CJK_SC',sans-serif] text-[12px] leading-4">
      <div className="relative flex h-screen flex-col overflow-hidden rounded-t-[6px] border border-[#949494] bg-[#b8b8b8] px-[3px] pb-[3px]">
        <TitleBar />
        <OptionsBar />
        <div className="flex min-h-0 flex-1">
          <Toolbar />
          <DocumentArea />
          <div className="flex w-[292px] shrink-0 flex-col">
            <div className="flex h-3 shrink-0 items-center justify-between border border-t-0 border-[#949494] bg-[#a2a2a2] pr-[6px] pl-[23px]">
              <DoubleArrow left />
              <DoubleArrow />
            </div>
            <div className="flex min-h-0 flex-1 gap-px">
              <IconDock />
              <div className="flex min-w-0 flex-1 flex-col">
                <PropertiesPanel />
                <LayersPanel />
              </div>
            </div>
          </div>
        </div>
        <Watermark />
      </div>
    </div>
  );
}
